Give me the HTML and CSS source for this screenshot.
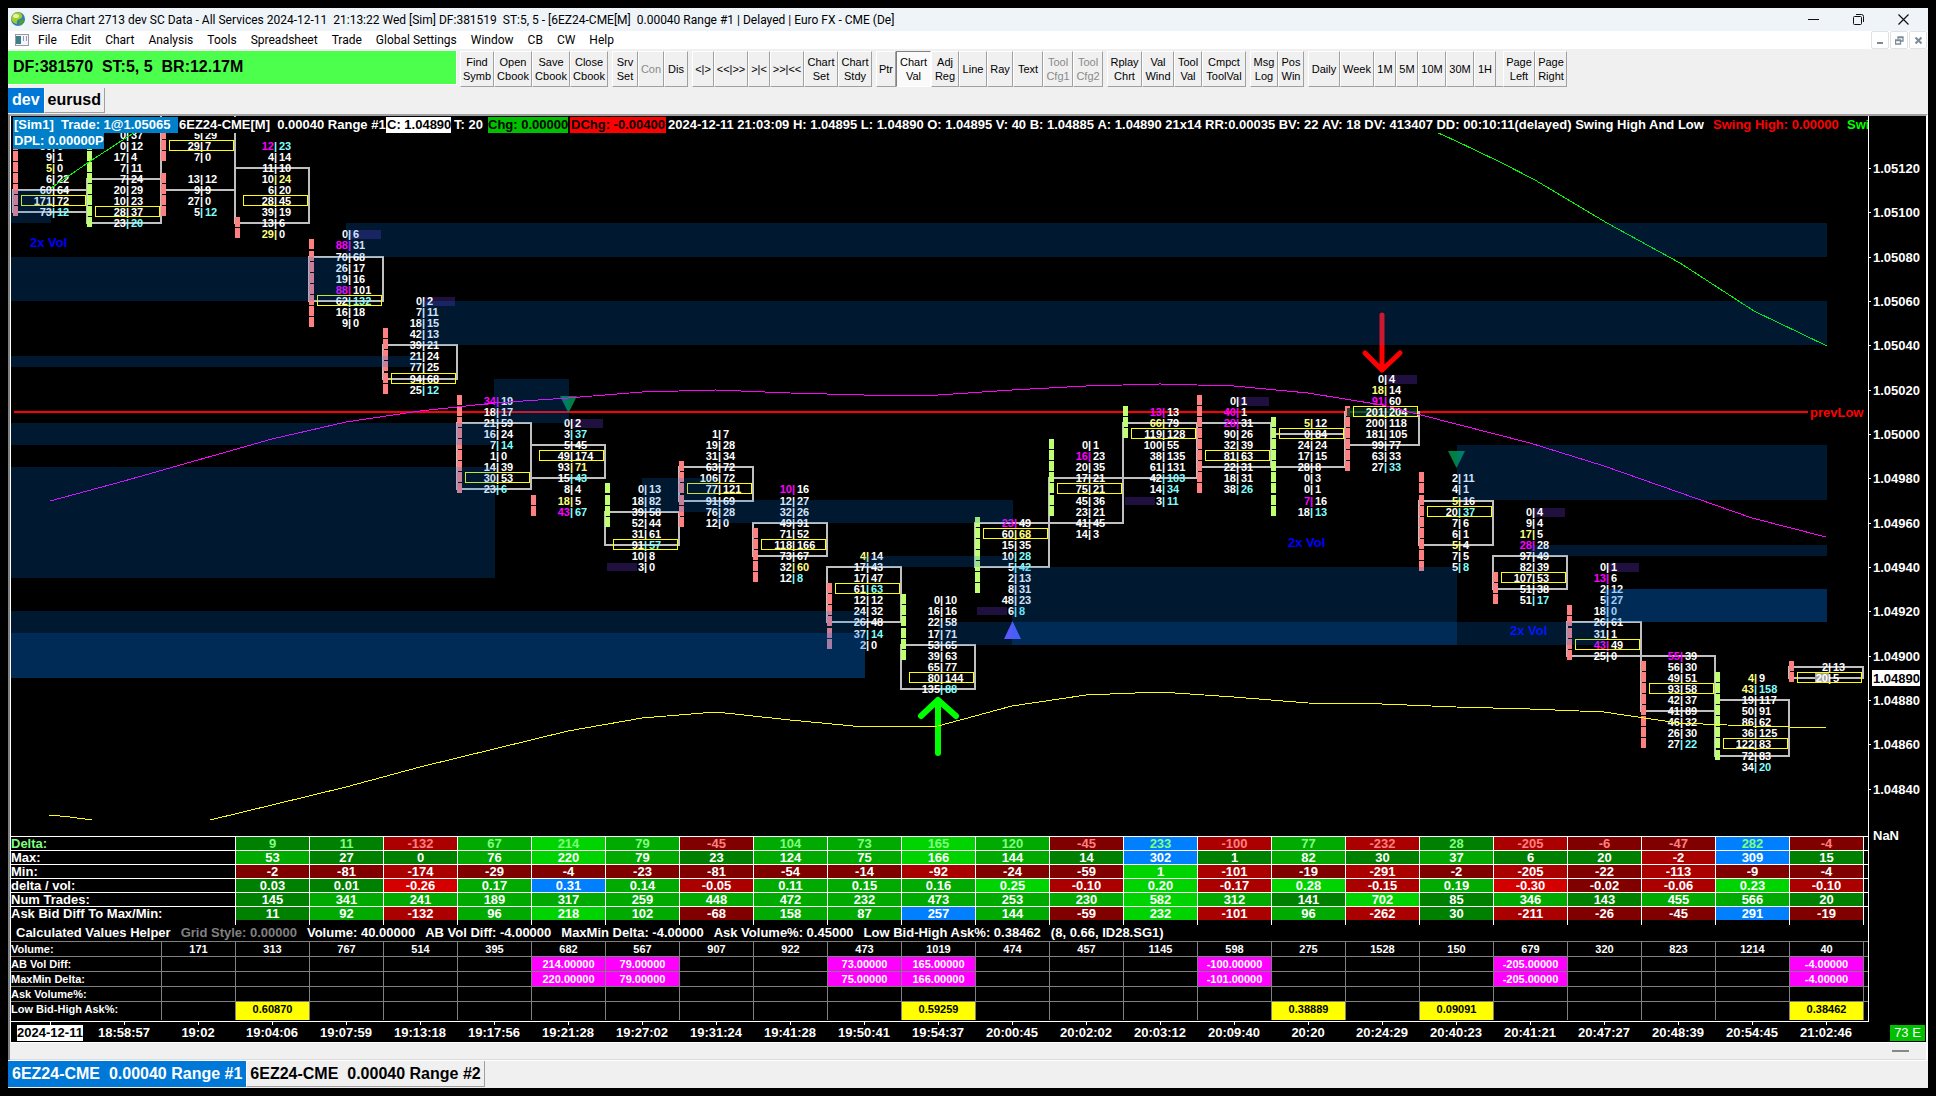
FILE: index.html
```html
<!DOCTYPE html>
<html lang="en">
<head>
<meta charset="utf-8">
<title>Sierra Chart - 6EZ24-CME[M] 0.00040 Range #1</title>
<link rel="stylesheet" href="styles.css">
</head>
<body>
<div class="app">
  <header class="titlebar">
    <svg class="globe" width="15" height="15" viewBox="0 0 15 15" aria-hidden="true">
      <circle cx="7" cy="7" r="7" fill="#2f7fb5"/>
      <path d="M3 1.5Q7-1 10 1.5Q13 5 9 7Q5 8 6 12Q3 12 1 9Q-1 5 3 1.5Z" fill="#9fce2e"/>
      <path d="M9 8Q13 7 13.500 8.500Q12.500 12 9 13.500Q7 11 9 8Z" fill="#4f9c3a"/>
      <ellipse cx="5" cy="4" rx="3" ry="2" fill="#e6f59a"/>
    </svg>
    <h1 class="title">Sierra Chart 2713 dev SC Data - All Services 2024-12-11 &nbsp;21:13:22 Wed [Sim] DF:381519 &nbsp;ST:5, 5 - [6EZ24-CME[M] &nbsp;0.00040 Range #1 | Delayed | Euro FX - CME (De]</h1>
    <div class="winbtns">
      <button aria-label="Minimize"><svg width="11" height="11"><path d="M0 5.500H11" stroke="#111" fill="none"/></svg></button>
      <button aria-label="Restore"><svg width="11" height="11"><rect x=".5" y="2.500" width="8" height="8" rx="1" fill="none" stroke="#111"/><path d="M3 .5H8.500Q10.500 .5 10.500 2.500V8" stroke="#111" fill="none"/></svg></button>
      <button aria-label="Close"><svg width="11" height="11"><path d="M.5 .5L10.500 10.500M10.500 .5L.5 10.500" stroke="#111" stroke-width="1.200" fill="none"/></svg></button>
    </div>
  </header>

  <nav class="menubar">
    <svg class="docicon" width="14" height="12" aria-hidden="true"><rect x=".5" y=".5" width="13" height="11" fill="#f4f4ff" stroke="#99a"/><rect x="1" y="2" width="5" height="8" fill="#3d7f82"/><rect x="8" y="2" width="1" height="5" fill="#99a"/><rect x="11" y="2" width="1" height="5" fill="#99a"/></svg>
    <button>File</button><button>Edit</button><button>Chart</button><button>Analysis</button><button>Tools</button><button>Spreadsheet</button><button>Trade</button><button>Global Settings</button><button>Window</button><button>CB</button><button>CW</button><button>Help</button>
    <div class="mdibtns">
      <button aria-label="Minimize chart"><svg width="9" height="9"><path d="M1 7H7" stroke="#7b8a99" stroke-width="2"/></svg></button>
      <button aria-label="Restore chart"><svg width="9" height="9"><path d="M3 3V1H8V5H6M3 1.500H8M.5 4H5.500V8H.5ZM.5 4.500H5.500" fill="none" stroke="#7b8a99" stroke-width="1.300"/></svg></button>
      <button aria-label="Close chart"><svg width="9" height="9"><path d="M1.500 1.500L7.500 7.500M7.500 1.500L1.500 7.500" stroke="#7b8a99" stroke-width="2"/></svg></button>
    </div>
  </nav>

  <div class="toolbar">
    <div class="status">DF:381570 &nbsp;ST:5, 5 &nbsp;BR:12.17M</div>
    <div class="group"><button class="w34">Find<br>Symb</button><button class="w38">Open<br>Cbook</button><button class="w38">Save<br>Cbook</button><button class="w38">Close<br>Cbook</button></div>
    <div class="group"><button class="w26">Srv<br>Set</button><button class="w26" disabled>Con</button><button class="w24">Dis</button></div>
    <div class="group"><button class="w22">&lt;|&gt;</button><button class="w34">&lt;&lt;|&gt;&gt;</button><button class="w22">&gt;|&lt;</button><button class="w34">&gt;&gt;|&lt;&lt;</button><button class="w34">Chart<br>Set</button><button class="w34">Chart<br>Stdy</button></div>
    <div class="group"><button class="w20">Ptr</button><button class="w35 pressed">Chart<br>Val</button><button class="w28">Adj<br>Reg</button><button class="w28">Line</button><button class="w26">Ray</button><button class="w30">Text</button><button class="w30" disabled>Tool<br>Cfg1</button><button class="w30" disabled>Tool<br>Cfg2</button></div>
    <div class="group"><button class="w35">Rplay<br>Chrt</button><button class="w32">Val<br>Wind</button><button class="w28">Tool<br>Val</button><button class="w44">Cmpct<br>ToolVal</button></div>
    <div class="group"><button class="w28">Msg<br>Log</button><button class="w26">Pos<br>Win</button></div>
    <div class="group"><button class="w32">Daily</button><button class="w34">Week</button><button class="w22">1M</button><button class="w22">5M</button><button class="w28">10M</button><button class="w28">30M</button><button class="w22">1H</button><span class="spacer"></span><button class="w32">Page<br>Left</button><button class="w32">Page<br>Right</button></div>
  </div>

  <div class="tabs top"><button class="active">dev</button><button>eurusd</button></div>

  <main class="frame">
    <section class="plot">
      <svg id="chart" viewBox="11 116 1915 720" role="img" aria-label="Number bars chart of 6EZ24-CME"></svg>
      <div class="info">
        <div class="line">
          <span class="sim">[Sim1] &nbsp;Trade: 1@1.05065</span>
          <span class="sym">6EZ24-CME[M] &nbsp;0.00040 Range #1</span>
          <span class="close">C: 1.04890</span>
          <span class="tick">T: 20</span>
          <span class="chg">Chg: 0.00000</span>
          <span class="dchg">DChg: -0.00400</span>
          <span class="quote"><span>2024-12-11</span><span>21:03:09</span><span>H: 1.04895</span><span>L: 1.04890</span><span>O: 1.04895</span><span>V: 40</span><span>B: 1.04885</span><span>A: 1.04890</span><span>21x14</span><span>RR:0.00035</span><span>BV: 22</span><span>AV: 18</span><span>DV: 413407</span><span>DD: 00:10:11(delayed)</span><span>Swing High And Low</span></span>
          <span class="high">Swing High: 0.00000</span>
          <span class="low">Swing Low: 0.00000</span>
        </div>
        <div class="line"><span class="dpl">DPL: 0.00000P</span></div>
      </div>
    </section>

    <section class="studies">
      <div class="panels">
        <table class="delta" id="delta"></table>
        <p class="helper"><span>Calculated Values Helper</span><span class="dim">Grid Style: 0.00000</span><span>Volume: 40.00000</span><span>AB Vol Diff: -4.00000</span><span>MaxMin Delta: -4.00000</span><span>Ask Volume%: 0.45000</span><span>Low Bid-High Ask%: 0.38462</span><span>(8, 0.66, ID28.SG1)</span></p>
        <table class="values" id="values"></table>
      </div>
      <div class="scale">NaN</div>
    </section>

    <section class="timeaxis">
      <ol id="times"></ol>
      <span class="count">73 E</span>
    </section>
    <div class="scroller"><span></span></div>
  </main>

  <div class="tabs bottom"><button class="active">6EZ24-CME &nbsp;0.00040 Range #1</button><button>6EZ24-CME &nbsp;0.00040 Range #2</button></div>
</div>
<script src="chart.js"></script>
</body>
</html>
```
FILE: styles.css
```css
* { box-sizing: border-box; }
body { margin: 0; padding: 8px; background: #000; font-family: "Liberation Sans", Arial, sans-serif; color: #000; }
button { font: inherit; color: inherit; background: none; border: 0; padding: 0; margin: 0; white-space: nowrap; }
.app { background: #f0f0f0; }

.titlebar { display: flex; align-items: center; height: 23px; background: #eff4f9; padding-left: 3px; }
.globe { flex: none; margin-right: 6px; }
.title { margin: 0; flex: 1; font: 400 12px/20px Roboto, "Noto Sans", sans-serif; white-space: nowrap; overflow: hidden; }
.winbtns { display: flex; height: 20px; margin-right: 2px; }
.winbtns button { width: 45px; display: grid; place-items: center; }

.menubar { display: flex; align-items: center; height: 18px; background: #fff; font: 12px/18px Roboto, "Noto Sans", sans-serif; padding-left: 7px; gap: 14px; }
.docicon { flex: none; margin-right: -5px; }
.mdibtns { display: flex; gap: 1px; margin-left: auto; padding-right: 1px; }
.mdibtns button { width: 18px; height: 18px; border: 1px solid #e2e2e2; border-radius: 2px; display: grid; place-items: center; }

.toolbar { display: flex; height: 39px; padding: 2px 0 1px; gap: 4px; }
.status { width: 449px; height: 34px; margin-right: -1px; padding-left: 5px; background: #4dff4d; border-right: 1px solid #fff; border-bottom: 1px solid #fff; font: bold 16px/32px "Liberation Sans", Arial, sans-serif; white-space: nowrap; }
.group { display: flex; }
.group button { border: 1px solid; border-color: #fff #a0a0a0 #a0a0a0 #fff; font-size: 11px; line-height: 14px; height: 36px; overflow: hidden; }
.group button:disabled { color: #8a8a8a; }
.group .pressed { background: #fafafa; border-color: #808080 #fff #fff #808080; }
.spacer { width: 7px; height: 36px; border-bottom: 1px solid #a0a0a0; }
.w20 { width: 20px; } .w22 { width: 22px; } .w24 { width: 24px; } .w26 { width: 26px; }
.w28 { width: 28px; } .w30 { width: 30px; } .w32 { width: 32px; } .w34 { width: 34px; }
.w35 { width: 35px; } .w38 { width: 38px; } .w44 { width: 44px; }

.tabs { display: flex; font: bold 16px/24px "Liberation Sans", Arial, sans-serif; }
.tabs button { padding: 0 3px; border-right: 1px solid #a0a0a0; border-bottom: 1px solid #a0a0a0; border-left: 1px solid #fff; }
.tabs .active { background: #0078d7; color: #fff; border-color: #0078d7; }
.tabs.top { height: 26px; padding-bottom: 1px; }
.tabs.bottom { height: 28px; padding-bottom: 1px; border-top: 1px solid #fff; }

.frame { color: #fff; border-style: solid; border-color: #a0a0a0 #fff #f0f0f0 #808080; border-width: 2px 2px 0 2px; padding-left: 1px; background: linear-gradient(90deg, #fff 1px, #000 1px); }
.plot { position: relative; overflow: hidden; }
#chart { display: block; width: 100%; height: auto; }
#chart text { font: bold 13px "Liberation Sans", Arial, sans-serif; fill: #fff; }
#chart .cell { font-size: 11px; }
#chart .m { fill: #f0f; } #chart .c { fill: #80ffff; } #chart .y { fill: #ffff80; }
#chart .vol { fill: #00f; } #chart .prev { fill: #f00; } #chart .last { fill: #000; }
.crisp { shape-rendering: crispEdges; }
.zone { fill: #0078f0; fill-opacity: .2; }
.study { fill: none; stroke-width: 1; }

.info { position: absolute; left: 2px; top: 1px; right: 58px; overflow: hidden; font: bold 13px/15px "Liberation Sans", Arial, sans-serif; }
.line { display: flex; white-space: pre; }
.line > span { flex: none; height: 16px; background: #000; }
.line .sim { width: 165px; padding-left: 1px; background: #0080c8; }
.line .sym { width: 208px; padding-left: 1px; }
.line .close { width: 65px; padding-left: 1px; background: #fff; color: #000; }
.line .tick { width: 37px; padding-left: 3px; }
.line .chg { width: 80px; background: #00c000; color: #000; }
.line .dchg { width: 96px; margin-left: 2px; padding-left: 1px; background: #f00; color: #000; }
.line .quote { display: flex; justify-content: space-between; width: 1040px; padding: 0 2px; }
.line .high { width: 134px; padding-left: 7px; color: #f00; }
.line .low { padding-left: 7px; color: #0f0; }
.line .dpl { width: 91px; padding-left: 1px; background: #0080c8; }

.studies { display: flex; }
.panels { flex: 1; border-right: 1px solid #fff; border-bottom: 1px solid #fff; padding-bottom: 1px; }
.scale { flex: 0 0 57px; padding-left: 4px; margin-top: -8px; font: bold 13px/16px "Liberation Sans", Arial, sans-serif; }
table { width: 100%; table-layout: fixed; border-collapse: separate; border-spacing: 0; }
th, td { padding: 0; text-align: center; font-weight: bold; white-space: nowrap; overflow: hidden; }
th { text-align: left; }
.tail { width: 4px; }
.delta { font-size: 13px; line-height: 13px; }
.delta .name { width: 225px; }
.delta th, .delta td { height: 14px; border-top: 1px solid #fff; border-right: 1px solid #fff; }
.delta .end { border-right: 0; }
.delta .ticks td { height: 5px; border-top: 0; line-height: 5px; }
.delta .tone td, .delta .tone th { color: #80ff80; }
.delta .tone .r1, .delta .tone .r2 { color: #ff8080; }
.g1 { background: #008000; } .g2 { background: #00aa00; } .g3 { background: #00d400; }
.r1 { background: #800000; } .r2 { background: #aa0000; } .r3 { background: #d40000; }
.bl { background: #0080ff; }
.helper { margin: 0; height: 16px; padding-left: 5px; display: flex; gap: 10px; font: bold 13px/16px "Liberation Sans", Arial, sans-serif; white-space: nowrap; }
.helper .dim { color: #808080; }
.values { font-size: 11px; line-height: 14px; }
.values .name { width: 151px; }
.values th, .values td { height: 15px; border-top: 1px solid #808080; border-right: 1px solid #808080; vertical-align: top; }
.values tr:last-child > * { height: 19px; }
.values .end { border-right: 0; }
.mg { background: #f0f; } .yl { background: #ff0; color: #000; }

.timeaxis { display: flex; height: 20px; padding-right: 1px; font: bold 13px/16px "Liberation Sans", Arial, sans-serif; }
.timeaxis ol { flex: 1; margin: 0; padding: 0 27px 0 2px; list-style: none; display: grid; grid-template-columns: repeat(25, minmax(0, 1fr)); }
.timeaxis li { display: flex; flex-direction: column; align-items: center; white-space: nowrap; }
.timeaxis li::before { content: ""; width: 1px; height: 3px; background: #fff; }
.timeaxis time { height: 16px; }
.timeaxis li:first-child time { background: #fff; color: #000; }
.count { width: 35px; height: 16px; margin-top: 3px; text-align: center; background: #00c000; font-weight: 400; }
.scroller { height: 18px; margin-left: -1px; background: #f0f0f0; border-top: 1px solid #fff; border-bottom: 1px solid #dcdcdc; display: flex; justify-content: flex-end; align-items: center; padding-right: 17px; }
.scroller span { width: 17px; height: 2px; background: #888; }
```
FILE: chart.js
```js
const FIRST_X = 50, STEP_X = 74;
const rowY = n => Math.floor(168.3 + 11.09 * n);

// Each bar: first row, open/close rows, strip colour and rows, peak row, cells "bid|ask".
// Suffixes: m = magenta, c = cyan, y = yellow.
const bars = [
  { top: -2, box: [2, 4], strip: 'p', rows: [[-2, 4]], peak: 3, cells: '36|6 9|1 5y|0 6|22 60|64 171|72 73|12c' },
  { top: -3, box: [1, 5], strip: 'g', rows: [[-2, 5]], peak: 4, cells: '0|37 0|12 17|4 7|11 7|24 20|29 10|23 28|37 23|20c' },
  { top: -3, box: [-6, 2], strip: 'p', rows: [[-4, -1], [1, 4]], peak: -2, cells: '5|29 29|7 7|0 - 13|12 9|9 27|0 5|12c' },
  { top: -2, box: [0, 5], strip: 'p', rows: [[5, 6]], peak: 3, cells: '12m|23c 4|14 11|10 10|24y 6|20 28|45 39|19 13|6 29y|0' },
  { top: 6, box: [8, 12], strip: 'p', rows: [[7, 14]], peak: 12, mark: 'r', cells: '0|6 88m|31 70|68 26|17 19|16 88m|101 62|132c 16|18 9|0' },
  { top: 12, box: [16, 19], strip: 'p', rows: [[15, 20]], peak: 19, mark: 'r', cells: '0|2 7|11 18|15 42|13 39|21 21|24 77|25 94|68 25|12c' },
  { top: 21, box: [23, 29], strip: 'p', rows: [[21, 29]], peak: 28, cells: '34m|19 18|17 21|59 16|24 7|14c 1|0 14|39 30|53 23|6c' },
  { top: 23, box: [25, 28], strip: 'p', rows: [[30, 31]], peak: 26, mark: 'r', cells: '0|2 3|37c 5|45 49|174 93|71y 15|43c 8|4 18y|5 43m|67c' },
  { top: 29, box: [31, 34], strip: 'g', rows: [[29, 32]], peak: 34, mark: 'l', cells: '0|13 18|82 39|58 52|44 31|61 91|57c 10|8 3|0' },
  { top: 24, box: [27, 30], strip: 'p', rows: [[27, 32]], peak: 29, cells: '1|7 19|28 31|34 63|72 106|72 77|121 91|69 76|28 12|0' },
  { top: 29, box: [32, 35], strip: 'p', rows: [[33, 37]], peak: 34, cells: '10m|16 12|27 32|26 49|91 71|52 118|166 73|67 32|60y 12|8c' },
  { top: 35, box: [36, 41], strip: 'p', rows: [[38, 43]], peak: 38, cells: '4y|14 17|43 17|47 61|63c 12|12 24|32 26|48 37|14c 2|0' },
  { top: 39, box: [43, 47], strip: 'g', rows: [[39, 44]], peak: 46, cells: '0|10 16|16 22|58 17|71 53|65 39|63 65|77 80|144 135|88c' },
  { top: 32, box: [32, 36], strip: 'g', rows: [[32, 38]], peak: 33, mark: 'l', cells: '23m|49 60|68y 15|35 10|28c 5|42c 2|13 8|31 48|23 6|8c' },
  { top: 25, box: [28, 32], strip: 'g', rows: [[25, 31]], peak: 29, cells: '0|1 16m|23 20|35 17|21 75|21 45|36 23|21 41|45 14|3' },
  { top: 22, box: [23, 28], strip: 'g', rows: [[22, 24]], peak: 24, mark: 'l', cells: '13m|13 66y|79 119|128 100|55 38|135 61|131 42|103c 14|34c 3|11c' },
  { top: 21, box: [23, 27], strip: 'p', rows: [[21, 29]], peak: 26, mark: 'r', cells: '0|1 40m|1 28m|31 90|26 32|39 81|63 22|31 18|31 38|26c' },
  { top: 23, box: [24, 27], strip: 'g', rows: [[23, 31]], peak: 24, cells: '5y|12 0|84 24|24 17|15 28|8 0|3 0|1 7m|16 18|13c' },
  { top: 19, box: [22, 25], strip: 'p', rows: [[22, 27]], peak: 22, mark: 'r', cells: '0|4 18y|14 91m|60 201|204 200|118 181|105 99|77 63|33 27|33c' },
  { top: 28, box: [30, 34], strip: 'p', rows: [[28, 36]], peak: 31, cells: '2|11 4|1 5y|16 20|37c 7|6 6|1 5y|4 7|5 5|8c' },
  { top: 31, box: [35, 38], strip: 'p', rows: [[37, 39]], peak: 37, mark: 'r', cells: '0|4 9|4 17y|5 28m|28 97|49 82|39 107|53 51|38 51|17c' },
  { top: 36, box: [41, 44], strip: 'p', rows: [[40, 44]], peak: 43, mark: 'r', cells: '0|1 13m|6 2|12 5|27 18|0 26|61 31|1 43m|49 25|0' },
  { top: 44, box: [44, 49], strip: 'p', rows: [[45, 52]], peak: 47, cells: '55m|39 56|30 49|51 93|58 42|37 41|89 46|32 26|30 27|22c' },
  { top: 46, box: [48, 53], strip: 'g', rows: [[46, 53]], peak: 52, cells: '4y|9 43y|158c 19|117 50|91 86|62 36|125 122|83 72|83 34|20c' },
  { top: 45, box: [45, 46], strip: 'p', rows: [[45, 46]], peak: 46, cells: '2|13 20|5' }
];

// Supply / demand zones: left, top, right, bottom.
const zones = [
  [346, 223, 1827, 257], [11, 257, 346, 301], [420, 301, 1827, 345], [11, 190, 51, 223],
  [11, 356, 420, 367], [11, 423, 495, 445], [11, 467, 495, 578], [494, 379, 569, 423],
  [642, 478, 716, 512], [716, 500, 1013, 523], [864, 556, 1013, 567], [11, 611, 865, 678],
  [11, 633, 865, 678], [1012, 567, 1457, 645], [938, 622, 1605, 645], [1457, 445, 1827, 500],
  [1530, 545, 1827, 556], [1604, 589, 1827, 622], [1604, 589, 1827, 622]
];

const studies = [
  ['#f0f', '50,501 124,481 198,460 272,439 346,422 420,411 494,403 568,398 642,392 716,390 790,393 864,395 938,395 1012,390 1086,386 1160,384 1234,386 1308,393 1382,405 1456,424 1530,443 1604,466 1678,492 1752,518 1826,537'],
  ['#0f0', '51,188 89,162 135,132'],
  ['#0f0', '1434,131 1456,141 1500,162 1535,180 1607,223 1680,263 1737,300 1754,311 1827,346'],
  ['#ff0', '49,815 70,817 92,820'],
  ['#ff0', '210,820 272,805 346,787 420,767 494,749 568,731 642,718 716,712 790,720 864,727 938,726 1012,706 1086,695 1160,692 1234,697 1308,703 1382,704 1456,707 1530,709 1604,712 1678,723 1752,726 1826,728']
];

const out = [];
const rect = (x, y, w, h, attrs) => out.push(`<rect class="crisp" x="${x}" y="${y}" width="${w}" height="${h}" ${attrs}/>`);
const text = (x, y, s, cls) => out.push(`<text x="${x}" y="${y}" class="${cls}">${s}</text>`);

rect(14, 411, 1794, 2, 'fill="#f00"');
text(1810, 417, 'prevLow', 'prev');

bars.forEach((bar, i) => {
  const cx = FIRST_X + STEP_X * i;
  const y0 = rowY(bar.box[0]), y1 = rowY(bar.box[1]);
  rect(cx - 37, y0, 74, y1 - y0, 'fill="none" stroke="#c0c0c0" stroke-width="2"');
});

bars.forEach((bar, i) => {
  const cx = FIRST_X + STEP_X * i;
  const cells = bar.cells.split(' ');
  if (bar.mark === 'r') rect(cx + 3, rowY(bar.top) - 4, 32, 9, 'fill="#201040"');
  if (bar.mark === 'l') rect(cx - 35, rowY(bar.top + cells.length - 1) - 4, 30, 8, 'fill="#201040"');
  bar.rows.forEach(([a, b]) => {
    for (let n = a; n <= b; n++) rect(cx - 37, rowY(n) - 6, 5, 10, `fill="${bar.strip === 'p' ? '#ff8080' : '#c0ff70'}"`);
  });
  if (i === 18) rect(1347, 408, 70, 9, 'fill="#003018" fill-opacity=".8"');
  if (i === 24) rect(cx - 11, rowY(46) - 5, 14, 10, 'fill="#a0a0a0"');
  cells.forEach((cell, k) => {
    if (cell === '-') return;
    const [, bid, bc, ask, ac] = cell.match(/(\d+)([mcy]?)\|(\d+)([mcy]?)/);
    const y = rowY(bar.top + k) + 4;
    out.push(`<text class="cell" y="${y}"><tspan class="${bc}" x="${cx + 2}" text-anchor="end">${bid}</tspan><tspan class="${ac || bc}" x="${cx + 2}">|</tspan><tspan class="${ac}" x="${cx + 7}">${ask}</tspan></text>`);
  });
  rect(cx - 28.5, rowY(bar.peak) - 5.5, 64, 10, 'fill="none" stroke="#ff0"');
});

out.push('<path d="M938 753V700M921 716L938 700L956 716" fill="none" stroke="#0f0" stroke-width="6" stroke-linecap="round" stroke-linejoin="round"/>');
out.push('<path d="M1382 315V370M1365 353L1382 370L1400 353" fill="none" stroke="#f00" stroke-width="5" stroke-linecap="round" stroke-linejoin="round"/>');
out.push('<path d="M560 396H577L568.500 413ZM1448 451H1465L1456.500 468Z" fill="#008040"/>');
out.push('<path d="M1012.500 621L1004 639H1021Z" fill="#7050ff"/>');
studies.forEach(([color, pts]) => out.push(`<polyline class="study crisp" stroke="${color}" points="${pts}"/>`));
text(30, 247, '2x Vol', 'vol');
text(1288, 547, '2x Vol', 'vol');
text(1510, 635, '2x Vol', 'vol');
zones.forEach(([l, t, r, b]) => out.push(`<rect class="zone crisp" x="${l}" y="${t}" width="${r - l}" height="${b - t}"/>`));

// Price scale
rect(1868, 116, 1, 720, 'fill="#fff"');
for (let n = 0; n <= 56; n += 4) {
  const y = rowY(n);
  rect(1869, y, 2, 1, 'fill="#fff"');
  text(1873, y + 5, (1.0512 - n * 0.00005).toFixed(5), 'price');
}
rect(1872, 670, 48, 16, 'fill="#fff"');
text(1873, 683, '1.04890', 'last');
document.getElementById('chart').innerHTML = out.join('');

const colours = { g: 'g1', G: 'g2', H: 'g3', r: 'r1', R: 'r2', S: 'r3', B: 'bl', m: 'mg', y: 'yl' };
const makeCell = s => {
  if (s === '.') return '<td></td>';
  const key = colours[s.slice(-1)];
  return key ? `<td class="${key}">${s.slice(0, -1)}</td>` : `<td>${s}</td>`;
};
const makeRows = data => data.map(([name, vals]) =>
  `<tr${name === 'Delta:' ? ' class="tone"' : ''}><th class="name" scope="row">${name}</th>${vals.split(' ').map(makeCell).join('')}<td class="tail end"></td></tr>`).join('');

document.getElementById('delta').innerHTML = '<tbody>' + makeRows([
  ['Delta:', '9g 11g -132R 67G 214H 79G -45r 104G 73G 165H 120G -45r 233B -100R 77G -232R 28g -205R -6r -47r 282B -4r'],
  ['Max:', '53G 27g 0g 76G 220H 79G 23g 124G 75G 166H 144G 14g 302B 1g 82G 30g 37G 6g 20g -2R 309B 15g'],
  ['Min:', '-2r -81r -174R -29r -4r -23r -81r -54r -14r -92R -24r -59r 1H -101R -19r -291R -2r -205R -22r -113R -9r -4r'],
  ['delta / vol:', '0.03g 0.01g -0.26S 0.17G 0.31B 0.14G -0.05R 0.11G 0.15G 0.16G 0.25H -0.10R 0.20H -0.17R 0.28H -0.15R 0.19G -0.30S -0.02r -0.06R 0.23H -0.10R'],
  ['Num Trades:', '145g 341G 241G 189G 317G 259G 448G 472G 232G 473G 253G 230G 582H 312G 141g 702H 85g 346G 143g 455G 566G 20g'],
  ['Ask Bid Diff To Max/Min:', '11g 92G -132R 96G 218H 102G -68r 158G 87G 257B 144G -59r 232H -101R 96G -262R 30g -211R -26r -45r 291B -19r']
]) + '<tr class="ticks">' + '<td></td>'.repeat(23) + '<td class="end"></td></tr></tbody>';

document.getElementById('values').innerHTML = '<tbody>' + makeRows([
  ['Volume:', '171 313 767 514 395 682 567 907 922 473 1019 474 457 1145 598 275 1528 150 679 320 823 1214 40'],
  ['AB Vol Diff:', '. . . . . 214.00000m 79.00000m . . 73.00000m 165.00000m . . . -100.00000m . . . -205.00000m . . . -4.00000m'],
  ['MaxMin Delta:', '. . . . . 220.00000m 79.00000m . . 75.00000m 166.00000m . . . -101.00000m . . . -205.00000m . . . -4.00000m'],
  ['Ask Volume%:', Array(23).fill('.').join(' ')],
  ['Low Bid-High Ask%:', '. 0.60870y . . . . . . . . 0.59259y . . . . 0.38889y . 0.09091y . . . . 0.38462y']
]) + '</tbody>';

document.getElementById('times').innerHTML = ('2024-12-11 18:58:57 19:02 19:04:06 19:07:59 19:13:18 19:17:56 19:21:28 19:27:02 19:31:24 19:41:28 19:50:41 19:54:37 ' +
  '20:00:45 20:02:02 20:03:12 20:09:40 20:20 20:24:29 20:40:23 20:41:21 20:47:27 20:48:39 20:54:45 21:02:46')
  .split(' ').map(t => `<li><time>${t}</time></li>`).join('');
```
